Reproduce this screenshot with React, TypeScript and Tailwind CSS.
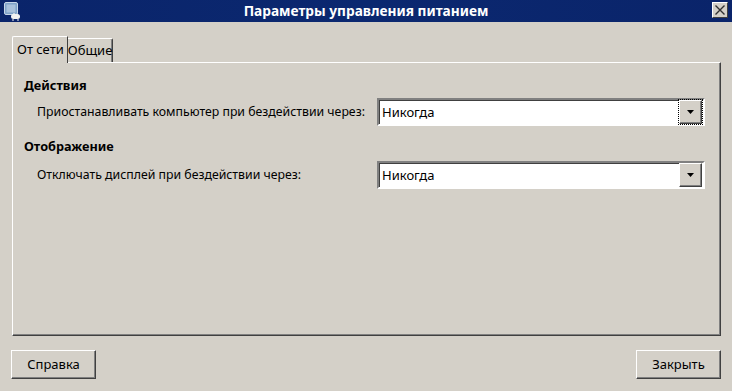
import React from 'react';

function Combo({ focused }: { focused?: boolean }) {
  return (
    <div className="shrink-0 w-[328px] h-[28px] border-2 border-t-[#808080] border-l-[#808080] border-r-white border-b-white bg-white flex items-center">
      <div className="flex-1 h-full flex items-center pl-[2px] border-t border-l border-[#404040] border-r-0 border-b-0">
        <span className="leading-none text-[13px]">Никогда</span>
      </div>
      <div
        className={
          'w-[23px] h-full bg-[#d4d0c8] flex items-center justify-center border border-t-white border-l-white border-r-[#404040] border-b-[#404040] shadow-[inset_-1px_-1px_0_#808080] mr-[1px] ' +
          (focused ? 'outline-dotted outline-1 outline-black' : '')
        }
      >
        <svg width="8" height="5" viewBox="0 0 8 5">
          <polygon points="0,0 7,0 3.5,4" fill="#000" />
        </svg>
      </div>
    </div>
  );
}

function Button({ label }: { label: string }) {
  return (
    <button className="w-[85px] h-[29px] bg-[#d4d0c8] border border-t-white border-l-white border-r-[#404040] border-b-[#404040] shadow-[inset_-1px_-1px_0_#808080] text-[13px] text-black">
      {label}
    </button>
  );
}

export default function App() {
  return (
    <div className="w-[732px] h-[391px] bg-[#d4d0c8] flex flex-col font-['Noto_Sans',sans-serif] text-[12.3px] text-black overflow-hidden">
      {/* title bar */}
      <div className="relative h-[22px] bg-gradient-to-r from-[#0a246a] via-[#0b2870] to-[#0a246a] flex items-center justify-center">
        <svg className="absolute left-[3px] top-[1px]" width="20" height="20" viewBox="0 0 20 20">
          <rect x="1.5" y="1.5" width="13" height="12" rx="1.5" fill="#7fa2c8" stroke="#c7d6e8" />
          <rect x="3.5" y="3.5" width="9" height="8" fill="#a9c1dc" />
          <path d="M11 12 v2" stroke="#dfe6ee" strokeWidth="1.5" />
          <rect x="8" y="13" width="9" height="5" rx="2.5" fill="#f2f2f2" />
          <path d="M10 18 v2 M15 18 v2" stroke="#f2f2f2" strokeWidth="1" />
        </svg>
        <span className="text-white font-bold text-[13.7px] leading-none">Параметры управления питанием</span>
        <div className="absolute right-[4px] top-[2px] w-[16px] h-[16px] bg-[#d4d0c8] border border-t-white border-l-white border-r-[#404040] border-b-[#404040] flex items-center justify-center">
          <svg width="12" height="12" viewBox="0 0 12 12">
            <path d="M1.5 1.5 L10.5 10.5 M10.5 1.5 L1.5 10.5" stroke="#303030" strokeWidth="1.4" />
          </svg>
        </div>
      </div>

      {/* tabs */}
      <div className="flex items-end pl-[12px] mt-[14px] h-[26px] relative z-10 text-[13px]">
        <div className="h-[27px] -mb-[1px] pl-[4px] pr-[3px] flex items-center bg-[#d4d0c8] border-t border-l border-white border-r border-r-[#404040] rounded-tl-[2px]">
          От сети
        </div>
        <div className="h-[24px] px-[0px] flex items-center bg-[#d4d0c8] border-t border-white border-r border-r-[#404040] shadow-[inset_-1px_0_0_#808080] rounded-tr-[2px]">
          Общие
        </div>
      </div>

      {/* panel */}
      <div className="ml-[12px] w-[709px] h-[274px] border border-t-white border-l-white border-r-[#404040] border-b-[#404040] shadow-[inset_-1px_-1px_0_#808080] pl-[11px] pt-[13px]">
        <div className="font-bold h-[18px] leading-[18px] text-[12.7px]">Действия</div>
        <div className="flex items-center mt-[4px] h-[28px]">
          <div className="w-[353px] shrink-0 pl-[13px] whitespace-nowrap">Приостанавливать компьютер при бездействии через:</div>
          <Combo focused />
        </div>
        <div className="font-bold h-[18px] leading-[18px] mt-[11px] text-[12.7px]">Отображение</div>
        <div className="flex items-center mt-[6px] h-[28px]">
          <div className="w-[353px] shrink-0 pl-[13px] whitespace-nowrap">Отключать дисплей при бездействии через:</div>
          <Combo />
        </div>
      </div>

      {/* buttons */}
      <div className="flex justify-between pl-[11px] pr-[11px] mt-[14px]">
        <Button label="Справка" />
        <Button label="Закрыть" />
      </div>
    </div>
  );
}
